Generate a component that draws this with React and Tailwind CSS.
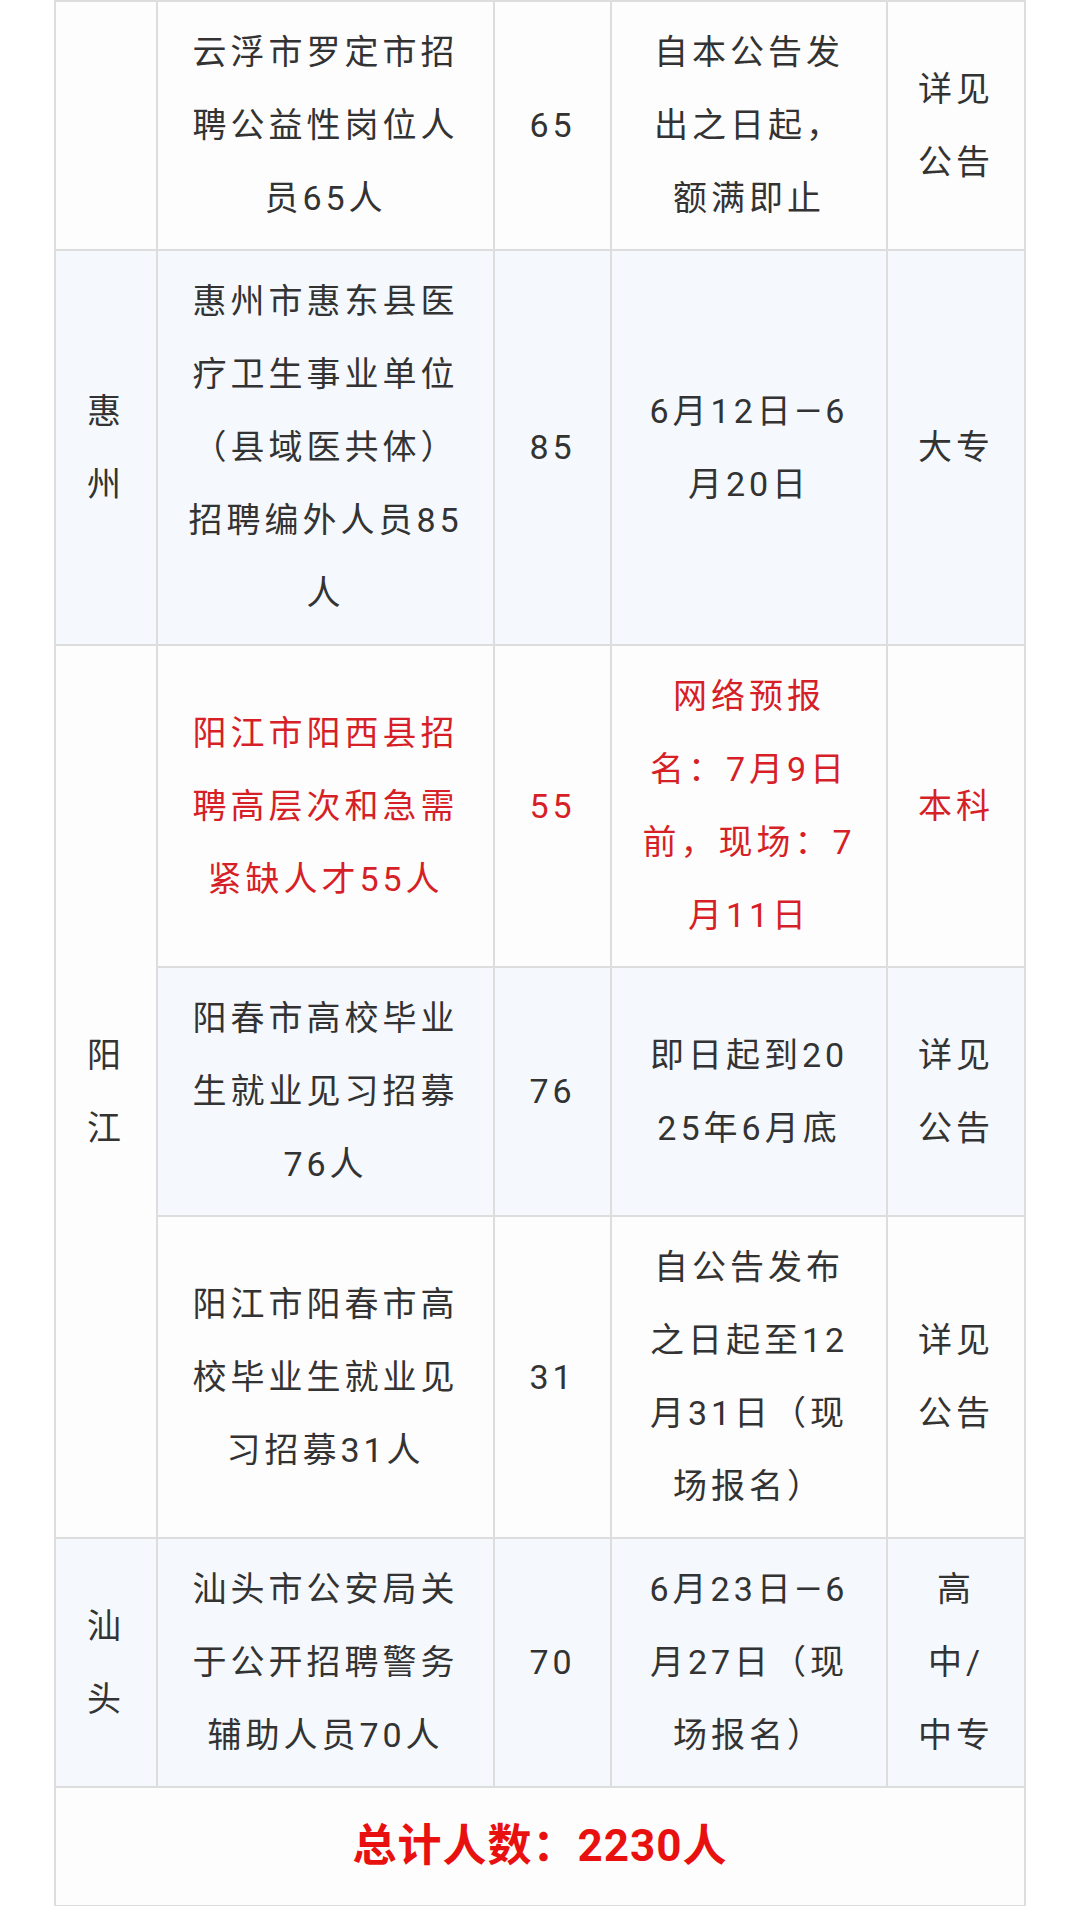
import React from "react";

const rows = [
  {
    bg: "bg-[#fdfdfd]",
    region: "",
    name: "云浮市罗定市招聘公益性岗位人员65人",
    count: "65",
    date: "自本公告发出之日起，额满即止",
    edu: "详见公告",
  },
  {
    bg: "bg-[#f5f9fd]",
    region: "惠州",
    name: "惠州市惠东县医疗卫生事业单位（县域医共体）招聘编外人员85人",
    count: "85",
    date: "6月12日—6月20日",
    edu: "大专",
  },
  {
    bg: "bg-[#fdfdfd]",
    region: "阳江",
    span: 3,
    red: true,
    name: "阳江市阳西县招聘高层次和急需紧缺人才55人",
    count: "55",
    date: "网络预报名：7月9日前，现场：7月11日",
    edu: "本科",
  },
  {
    bg: "bg-[#f5f9fd]",
    name: "阳春市高校毕业生就业见习招募76人",
    count: "76",
    date: "即日起到2025年6月底",
    edu: "详见公告",
  },
  {
    bg: "bg-[#fdfdfd]",
    name: "阳江市阳春市高校毕业生就业见习招募31人",
    count: "31",
    date: "自公告发布之日起至12月31日（现场报名）",
    edu: "详见公告",
  },
  {
    bg: "bg-[#f5f9fd]",
    region: "汕头",
    name: "汕头市公安局关于公开招聘警务辅助人员70人",
    count: "70",
    date: "6月23日—6月27日（现场报名）",
    edu: "高中/中专",
  },
];

const Cell = ({ bg, red, className = "", children }) => (
  <div
    className={`${bg} ${red ? "text-[#d61f26]" : "text-[#333333]"} ${className} flex items-center justify-center text-center px-[28px] py-[14px] break-all`}
  >
    <div className="w-full">{children}</div>
  </div>
);

export default function App() {
  return (
    <div
      className="min-h-screen bg-white"
      style={{ fontFamily: 'Roboto, "Noto Sans CJK SC", sans-serif' }}
    >
      {/* Recruitment table */}
      <div className="mx-auto w-[972px] bg-[#dddddd] p-[2px] grid grid-cols-[100px_335px_115px_274px_136px] gap-[2px] text-[34px] leading-[73px] tracking-[4px]">
        {rows.map((r, i) => (
          <React.Fragment key={i}>
            {r.region !== undefined && (
              <Cell
                bg={r.bg}
                className={r.span === 3 ? "row-span-3" : ""}
              >
                {r.region}
              </Cell>
            )}
            <Cell bg={r.bg} red={r.red}>
              {r.name}
            </Cell>
            <Cell bg={r.bg} red={r.red}>
              {r.count}
            </Cell>
            <Cell bg={r.bg} red={r.red}>
              {r.date}
            </Cell>
            <Cell bg={r.bg} red={r.red}>
              {r.edu}
            </Cell>
          </React.Fragment>
        ))}

        {/* Total */}
        <div className="col-span-5 bg-[#fdfdfd] py-[22px] text-center text-[44px] font-bold tracking-[1px] text-[#e8110f]">
          总计人数：2230人
        </div>
      </div>
    </div>
  );
}
